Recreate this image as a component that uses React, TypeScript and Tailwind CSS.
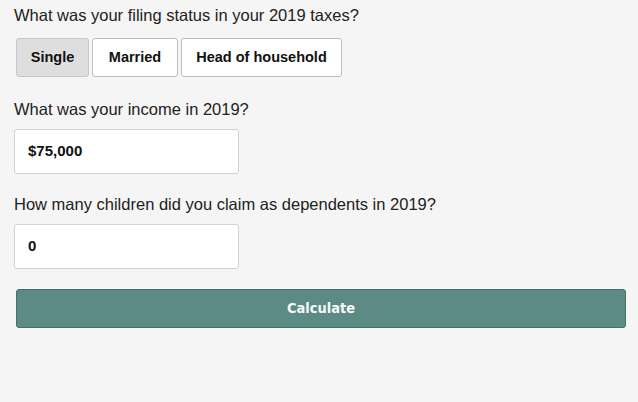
import React, { useState } from "react";

export default function App() {
  const [status, setStatus] = useState("Single");
  const opts = [
    { l: "Single", w: "w-[73px]" },
    { l: "Married", w: "w-[86px]" },
    { l: "Head of household", w: "w-[161px]" },
  ];
  return (
    <div
      className="w-[638px] h-[402px] bg-[#f5f5f5] pl-[14px] pr-[12px] pt-[4px] text-[#222]"
      style={{ fontFamily: '"Liberation Sans", Arial, sans-serif' }}
    >
      <div className="text-[16.5px] leading-[22px]">What was your filing status in your 2019 taxes?</div>
      <div className="flex gap-[3px] ml-[2px] mt-[12px]">
        {opts.map((o) => (
          <button
            key={o.l}
            onClick={() => setStatus(o.l)}
            className={`${o.w} h-[39px] rounded-[3px] border text-[14.5px] font-bold text-[#111] ${
              status === o.l ? "bg-[#dedede] border-[#c8c8c8]" : "bg-white border-[#bdbdbd]"
            }`}
          >
            {o.l}
          </button>
        ))}
      </div>
      <div className="text-[16.5px] leading-[22px] mt-[21px]">What was your income in 2019?</div>
      <div className="mt-[9px] w-[225px] h-[45px] bg-white border border-[#d2d2d2] rounded-[3px] flex items-center pl-[13px] text-[15px] font-bold text-[#111]">
        $75,000
      </div>
      <div className="text-[16.5px] leading-[22px] mt-[19px]">How many children did you claim as dependents in 2019?</div>
      <div className="mt-[9px] w-[225px] h-[45px] bg-white border border-[#d2d2d2] rounded-[3px] flex items-center pl-[13px] text-[15px] font-bold text-[#111]">
        0
      </div>
      <button
        className="mt-[20px] ml-[2px] w-[610px] h-[39px] bg-[#5c8a85] border border-[#456f6a] rounded-[3px] text-[#f4fafa] text-[14.5px] font-bold"
        style={{ fontFamily: '"Liberation Sans Narrow", "DejaVu Sans Condensed", "Liberation Sans", sans-serif' }}
      >
        Calculate
      </button>
    </div>
  );
}
